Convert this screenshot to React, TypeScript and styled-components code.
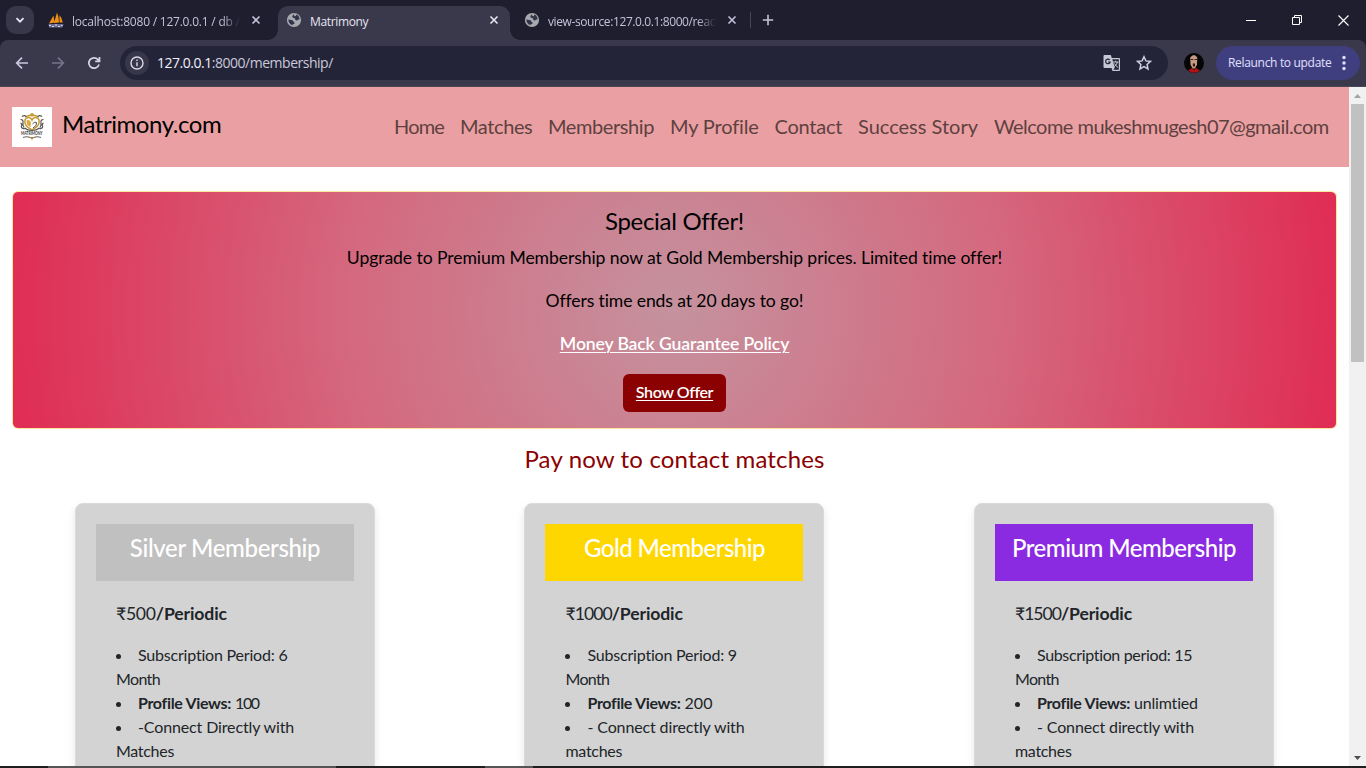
import React from 'react';
import styled, { createGlobalStyle } from 'styled-components';

const Global = createGlobalStyle`
  * { box-sizing: border-box; }
  html, body { margin: 0; height: 768px; overflow: hidden; background: #fff; }
`;

const Screen = styled.div`
  width: 1366px;
  height: 768px;
  display: flex;
  flex-direction: column;
  overflow: hidden;
  font-family: 'Open Sans', sans-serif;
`;

const Spaced = styled.span<{ $ls?: number; $bold?: boolean }>`
  letter-spacing: ${p => p.$ls ?? 0}px;
  font-weight: ${p => (p.$bold ? 700 : 'inherit')};
  font-variant-ligatures: none;
  white-space: nowrap;
`;

/* ---------- browser frame ---------- */

const TabStrip = styled.div`
  height: 40px;
  flex: none;
  display: flex;
  align-items: center;
  background: #1e1e2f;
  color: #c3c2d8;
`;
const TabSearch = styled.div`
  width: 28px;
  height: 28px;
  margin: 0 6px;
  border-radius: 10px;
  background: #38374a;
  display: grid;
  place-items: center;
`;
const Tab = styled.div<{ $active?: boolean; $w: number; $left?: number; $right?: number }>`
  position: relative;
  width: ${p => p.$w}px;
  height: 34px;
  margin-top: 6px;
  padding: 0 ${p => p.$right ?? 10}px 6px ${p => p.$left ?? 8}px;
  display: flex;
  align-items: center;
  border-radius: 10px 10px 0 0;
  background: ${p => (p.$active ? '#3a394c' : 'transparent')};
  color: ${p => (p.$active ? '#e6e5f2' : '#c3c2d8')};
  font-size: 12px;
  &::before, &::after {
    content: '';
    display: ${p => (p.$active ? 'block' : 'none')};
    position: absolute;
    bottom: 0;
    width: 10px;
    height: 10px;
  }
  &::before { left: -10px; background: radial-gradient(circle at 0 0, transparent 9.5px, #3a394c 10px); }
  &::after { right: -10px; background: radial-gradient(circle at 100% 0, transparent 9.5px, #3a394c 10px); }
`;
const TabTitle = styled.span<{ $fade?: boolean; $ls: number }>`
  flex: 1;
  margin: 2px 8px 0 8px;
  overflow: hidden;
  white-space: nowrap;
  letter-spacing: ${p => p.$ls}px;
  mask-image: ${p => (p.$fade ? 'linear-gradient(to right, #000 calc(100% - 18px), transparent)' : 'none')};
`;
const TabDivider = styled.div`
  width: 1px;
  height: 16px;
  margin: 0 11px 0 0;
  background: #46455a;
`;
const WindowButtons = styled.div`
  margin-left: auto;
  width: 138px;
  display: grid;
  grid-template-columns: repeat(3, 46px);
  place-items: center;
`;
const Toolbar = styled.div`
  height: 47px;
  display: flex;
  align-items: center;
  padding: 0 6px 1px 14px;
  background: #3a394c;
  border-bottom: 1px solid #4a4858;
  border-radius: 8px 8px 0 0;
`;
const ToolbarWrap = styled.div`
  flex: none;
  background: #1e1e2f;
`;
const NavIcons = styled.div`
  display: flex;
  gap: 20px;
  width: 106px;
`;
const UrlBar = styled.div`
  width: 1048px;
  height: 34px;
  border-radius: 17px;
  background: #242438;
  display: flex;
  align-items: center;
  padding: 0 16px 0 5px;
  font-size: 14px;
  color: #c9c8dc;
`;
const InfoBadge = styled.div`
  width: 24px;
  height: 24px;
  border-radius: 50%;
  background: #38374a;
  display: grid;
  place-items: center;
  margin-right: 8px;
`;
const Host = styled.span`color: #f1f0fb;`;
const UrlActions = styled.div`
  margin-left: auto;
  display: flex;
  align-items: center;
  gap: 15px;
`;
const Avatar = styled.div`
  width: 20px;
  height: 20px;
  margin: 0 12px 0 16px;
`;
const Relaunch = styled.div`
  width: 144px;
  height: 34px;
  border-radius: 17px;
  background: #3f3f80;
  color: #e2e0ff;
  display: flex;
  align-items: center;
  justify-content: space-between;
  padding: 0 14px 0 12px;
  font-size: 12px;
`;

/* ---------- page ---------- */

const Viewport = styled.div`
  height: 679px;
  flex: none;
  display: flex;
  overflow: hidden;
`;
const Page = styled.main`
  width: 1349px;
  height: 679px;
  overflow: hidden;
  font-family: Lato, sans-serif;
  color: #212529;
`;
const Scrollbar = styled.div`
  width: 17px;
  background: #f1f1f1;
  display: flex;
  flex-direction: column;
  align-items: center;
  justify-content: space-between;
`;
const ScrollTop = styled.div`
  display: flex;
  flex-direction: column;
  align-items: center;
`;
const ArrowBox = styled.div`
  width: 17px;
  height: 17px;
  display: grid;
  place-items: center;
`;
const Thumb = styled.div`
  width: 13px;
  height: 258px;
  background: #c1c1c1;
`;
const Navbar = styled.nav`
  height: 80px;
  display: flex;
  align-items: center;
  padding: 0 12px;
  background: #eaa0a2;
`;
const Brand = styled.div`
  display: flex;
  align-items: center;
  gap: 10px;
  font-size: 24px;
  line-height: 30px;
  color: #000;
  & > span { margin-top: -6px; }
`;
const NavLinks = styled.div`
  margin: -2px 0 0 auto;
  display: flex;
  font-size: 20px;
  line-height: 30px;
  color: #5e4041;
`;
const NavLink = styled.a<{ $w: number; $ls: number }>`
  width: ${p => p.$w}px;
  padding: 0 8px;
  letter-spacing: ${p => p.$ls}px;
  white-space: nowrap;
`;
const Offer = styled.section`
  margin: 24px 12px 0;
  height: 238px;
  padding: 14px 0 0;
  border: 1px solid #ffe69c;
  border-radius: 6px;
  background: radial-gradient(circle, #c5929e 0%, #d4697f 48%, #e02c54 100%);
  display: flex;
  flex-direction: column;
  align-items: center;
  color: #000;
`;
const OfferTitle = styled.h4`
  margin: 0 0 9px;
  font-size: 24px;
  font-weight: 400;
  line-height: 29px;
`;
const OfferText = styled.p<{ $link?: boolean }>`
  margin: 0 0 ${p => (p.$link ? 17 : 16)}px;
  font-size: 17.6px;
  line-height: 27px;
  color: ${p => (p.$link ? '#fff' : '#000')};
  font-weight: ${p => (p.$link ? 600 : 400)};
  text-decoration: ${p => (p.$link ? 'underline' : 'none')};
  text-underline-offset: 2px;
  text-decoration-thickness: 1px;
`;
const OfferButton = styled.button`
  width: 103px;
  height: 38px;
  border: 0;
  border-radius: 6px;
  background: #8b0000;
  color: #fff;
  font: 600 16px/24px Lato, sans-serif;
  text-decoration: underline;
  text-underline-offset: 2px;
  text-decoration-thickness: 1px;
  padding: 0 0 2px;
`;
const Heading = styled.h2`
  margin: 15px 0 0;
  text-align: center;
  font-size: 24px;
  line-height: 29px;
  font-weight: 400;
  color: #8b0000;
`;
const Plans = styled.div`
  margin-top: 30px;
  padding-left: 75px;
  display: flex;
  gap: 149.49px;
`;
const Card = styled.article`
  width: 300px;
  height: 500px;
  flex: none;
  padding: 20px;
  border: 1px solid #dadada;
  border-radius: 8px;
  background: #d3d3d3;
  box-shadow: 0 4px 8px rgba(0, 0, 0, 0.1);
`;
const CardTitle = styled.h3<{ $bg: string }>`
  margin: 0;
  height: 57px;
  padding-top: 9px;
  background: ${p => p.$bg};
  color: #fff;
  text-align: center;
  font-size: 24px;
  font-weight: 500;
  line-height: 29px;
`;
const CardBody = styled.div`
  padding: 19px 20px;
`;
const Price = styled.p`
  margin: 0 0 16px;
  font-size: 17.6px;
  line-height: 27px;
`;
const Features = styled.ul`
  margin: 0;
  padding: 0;
  font-size: 16px;
  line-height: 24px;
`;
const Feature = styled.li`
  list-style: none;
  white-space: nowrap;
  &::before {
    content: '';
    display: inline-block;
    width: 5px;
    height: 5px;
    margin-right: 17px;
    border-radius: 50%;
    background: #212529;
    vertical-align: 2px;
  }
`;
const Taskbar = styled.div`
  flex: 1;
  display: flex;
  background: #1f1f1f;
`;
const TaskSegment = styled.div<{ $w: number; $c: string }>`
  width: ${p => p.$w}px;
  background: ${p => p.$c};
`;

/* ---------- drawings ---------- */

const CloseIcon = () => (
  <svg width="16" height="16" viewBox="0 0 16 16" stroke="currentColor" strokeWidth="1.6">
    <path d="M4.5 4.5l7 7M11.5 4.5l-7 7" />
  </svg>
);
const Globe = () => (
  <svg width="16" height="16" viewBox="0 0 16 16">
    <circle cx="8" cy="8" r="7.100" fill="#a6a9ad" />
    <path d="M8 2.200Q6.500 3 6.300 4.400q0 1.400 1.500 1.500 1.500 0 1.300 1.400 0 1.200 1.600 1.100 1.400-.2 2-.9l.9-.2Q13.500 4 10.500 2.600L9.700 4.300 8.300 4z" fill="#33334a" />
    <path d="M2.400 7.300Q2.200 11.500 6.300 13.300L6.600 12.200q1.500.3 2-.7.200-1.300-1.100-1.800-.3-1.600-2-1.700-1.700.2-3.100-.7z" fill="#33334a" />
  </svg>
);
const Sails = () => (
  <svg width="16" height="16" viewBox="0 0 16 16">
    <path d="M1 11.5L5.500 3.500 6.500 10.500zM6 11L9 .5Q11 5 11 10.500zM11.500 10.500V3Q14 6 14.800 10.500z" fill="#f29111" />
    <path d="M.5 12h15l-1 3.500H1z" fill="#6d6c93" />
    <path d="M1 13.500h2M4 14.500h2M7 13h2M10 14.500h2M13 13.500h1.500" stroke="#d6d5ea" />
  </svg>
);
const Logo = () => (
  <svg width="40" height="40" viewBox="0 0 40 40">
    <path fill="#fff" d="M0 0h40v40H0z" />
    <path d="M20 23c-6-3-8-6-7-10 1-3.500 5.500-3.500 7 0 1.500-3.500 6-3.500 7 0 1 4-1 7-7 10z" fill="#fff" stroke="#c79a33" strokeWidth="1.500" />
    <path d="M14.500 13.500q3-1.500 4.500 2l-.5 5-3.500-3z" fill="#d9a93c" />
    <path d="M20.500 17q1.500-2.500 4-1.500 1 3-3.500 5.500" fill="none" stroke="#555" />
    <path d="M18 7.500h4M20 6v3.500M14 9.500q6-2.500 12 0" stroke="#c79a33" strokeWidth="1.500" fill="none" />
    <path d="M10 9.500q3-2 4 .5M30 9.500q-3-2-4 .5M8.500 12.500q3 0 2.500 3t1 5M31.500 12.500q-3 0-2.500 3t-1 5M8.500 16q2 1 1 3t3 3M31.500 16q-2 1-1 3t-3 3M12.500 21q3 2.500 7.500 2.500t7.500-2.500" fill="none" stroke="#575757" strokeWidth="1.200" />
    <text x="9" y="28.200" fontFamily="Lato, sans-serif" fontSize="5.200" fontWeight="700" fill="#333" textLength="21.500" lengthAdjust="spacingAndGlyphs">MATRIMONY</text>
    <path d="M11 30.500q4-1.500 7 0M29 30.500q-4-1.500-7 0" stroke="#666" fill="none" strokeWidth="1.200" />
    <path d="M17.500 30h5L20 32.800z" fill="#a98331" />
  </svg>
);
const Face = () => (
  <svg width="20" height="20" viewBox="0 0 20 20">
    <circle cx="10" cy="10" r="10" fill="#050505" />
    <path d="M6.200 4.500Q10 -.5 13.300 4.500l-.3 7L11 15.500H8.500L6.500 11.500z" fill="#c49a84" />
    <path d="M6.800 6.500h2.500M10.500 6.500H13" stroke="#3a2520" />
    <path d="M8.800 10.500h2.200v3H9z" fill="#3d1512" />
    <path d="M4 17.500l4-2.500 2 2 2-2 4 2.500Q10 22 4 17.500z" fill="#b01414" />
  </svg>
);
const Translate = () => (
  <svg width="18" height="18" viewBox="0 0 18 18">
    <path d="M1.500 1h6.300l1 3H16a1 1 0 0 1 1 1v11a1 1 0 0 1-1 1H9.500l-1-3h-7a1 1 0 0 1-1-1V2a1 1 0 0 1 1-1z" fill="#c7c6d4" />
    <path d="M9.300 5.200h6.500v10.500h-5.500l1.500-2z" fill="#242438" />
    <path d="M10 8h5.500M12.700 6.700V8M14.500 8q-.8 3-3.200 4.500M11.500 9.500q1 2 3.500 4" stroke="#c7c6d4" fill="none" />
    <path d="M6.800 6a2.300 2.300 0 1 0 .4 2H5" stroke="#242438" strokeWidth="1.200" fill="none" />
  </svg>
);

/* ---------- content ---------- */

const links: [string, number, number][] = [
  ['Home', 66, -0.8],
  ['Matches', 88, -0.4],
  ['Membership', 122, -0.4],
  ['My Profile', 104.5, -0.15],
  ['Contact', 83.5, -0.25],
  ['Success Story', 136, 0],
  ['Welcome mukeshmugesh07@gmail.com', 351, -0.53],
];

interface Plan {
  title: string;
  titleLs: number;
  bg: string;
  price: string;
  priceLs: number;
  period: string;
  periodLs: number;
  views: string;
  viewsLs: number;
  connect: string;
  matches: string;
}
const plans: Plan[] = [
  { title: 'Silver Membership', titleLs: -0.35, bg: '#c0c0c0', price: '₹500', priceLs: -0.25, period: 'Subscription Period: 6', periodLs: -0.2, views: '100', viewsLs: -1.5, connect: '-Connect Directly with', matches: 'Matches' },
  { title: 'Gold Membership', titleLs: -0.53, bg: '#ffd700', price: '₹1000', priceLs: -0.95, period: 'Subscription Period: 9', periodLs: -0.2, views: '200', viewsLs: 0, connect: '- Connect directly with', matches: 'matches' },
  { title: 'Premium Membership', titleLs: -0.5, bg: '#8a2be2', price: '₹1500', priceLs: -1, period: 'Subscription period: 15', periodLs: -0.34, views: 'unlimtied', viewsLs: -0.2, connect: '- Connect directly with', matches: 'matches' },
];

export default function App() {
  return (
    <Screen>
      <Global />
      <TabStrip>
        <TabSearch>
          <svg width="12" height="12" viewBox="0 0 12 12" fill="none" stroke="#e6e5f2" strokeWidth="1.800"><path d="M2.500 4.200L6 7.700l3.500-3.500" /></svg>
        </TabSearch>
        <Tab $w={238} $right={14}><Sails /><TabTitle $fade $ls={-0.22}>localhost:8080 / 127.0.0.1 / db / matrimony</TabTitle><CloseIcon /></Tab>
        <Tab $w={232} $right={8} $active><Globe /><TabTitle $ls={-0.35}>Matrimony</TabTitle><CloseIcon /></Tab>
        <Tab $w={240} $left={14}><Globe /><TabTitle $fade $ls={-0.4}>view-source:127.0.0.1:8000/read</TabTitle><CloseIcon /></Tab>
        <TabDivider />
        <svg width="12" height="12" viewBox="0 0 12 12" stroke="#c3c2d8" strokeWidth="1.600"><path d="M6 .8v10.400M.8 6h10.400" /></svg>
        <WindowButtons>
          <svg width="10" height="10" viewBox="0 0 10 10" stroke="#fff"><path d="M0 5.500h10" /></svg>
          <svg width="11" height="11" viewBox="0 0 11 11" stroke="#fff" fill="none"><path d="M.5 2.500h7v7h-7zM2.500 2.500v-2h7v7h-2" /></svg>
          <svg width="11" height="11" viewBox="0 0 11 11" stroke="#fff" strokeWidth="1.100"><path d="M.5.5l10 10M10.500.5l-10 10" /></svg>
        </WindowButtons>
      </TabStrip>
      <ToolbarWrap>
        <Toolbar>
          <NavIcons>
            <svg width="16" height="16" viewBox="0 0 16 16" fill="none" stroke="#c9c8e0" strokeWidth="1.700"><path d="M14 8H3M8 2.700L2.700 8 8 13.300" /></svg>
            <svg width="16" height="16" viewBox="0 0 16 16" fill="none" stroke="#75748a" strokeWidth="1.700"><path d="M2 8h11M8 2.700L13.300 8 8 13.300" /></svg>
            <svg width="16" height="16" viewBox="0 0 16 16" fill="none" stroke="#d5d4e4" strokeWidth="1.700"><path d="M13 9.500A5.200 5.200 0 1 1 11.800 4.400L13.300 6M13.500 2v4.300H9.200" /></svg>
          </NavIcons>
          <UrlBar>
            <InfoBadge>
              <svg width="14" height="14" viewBox="0 0 14 14" fill="none" stroke="#dad9e8" strokeWidth="1.400"><circle cx="7" cy="7" r="6" /><path d="M7 6.200v4M7 3.600v1.500" /></svg>
            </InfoBadge>
            <Spaced $ls={-0.48}><Host>127.0.0.1</Host>:8000/membership/</Spaced>
            <UrlActions>
              <Translate />
              <svg width="16" height="16" viewBox="0 0 16 16" fill="none" stroke="#cfcedd" strokeWidth="1.500"><path d="M8 1.700l1.900 4.200 4.600.5-3.400 3.100.9 4.500-4-2.300-4 2.300.9-4.500L1.500 6.400l4.600-.5z" /></svg>
            </UrlActions>
          </UrlBar>
          <Avatar><Face /></Avatar>
          <Relaunch>
            <Spaced $ls={-0.32}>Relaunch to update</Spaced>
            <svg width="4" height="16" viewBox="0 0 4 16" fill="#e2e0ff"><circle cx="2" cy="2.500" r="1.700" /><circle cx="2" cy="8" r="1.700" /><circle cx="2" cy="13.500" r="1.700" /></svg>
          </Relaunch>
        </Toolbar>
      </ToolbarWrap>

      <Viewport>
        <Page>
          <Navbar>
            <Brand><Logo /><Spaced $ls={-0.45}>Matrimony.com</Spaced></Brand>
            <NavLinks>
              {links.map(([label, w, ls]) => <NavLink key={label} $w={w} $ls={ls}>{label}</NavLink>)}
            </NavLinks>
          </Navbar>
          <Offer>
            <OfferTitle><Spaced $ls={-0.3}>Special Offer!</Spaced></OfferTitle>
            <OfferText><Spaced $ls={-0.09}>Upgrade to Premium Membership now at Gold Membership prices. Limited time offer!</Spaced></OfferText>
            <OfferText><Spaced $ls={-0.12}>Offers time ends at 20 days to go!</Spaced></OfferText>
            <OfferText $link><Spaced $ls={-0.13}>Money Back Guarantee Policy</Spaced></OfferText>
            <OfferButton><Spaced $ls={-0.4}>Show Offer</Spaced></OfferButton>
          </Offer>
          <Heading><Spaced $ls={0.16}>Pay now to contact matches</Spaced></Heading>
          <Plans>
            {plans.map(p => (
              <Card key={p.title}>
                <CardTitle $bg={p.bg}><Spaced $ls={p.titleLs}>{p.title}</Spaced></CardTitle>
                <CardBody>
                  <Price><Spaced $ls={p.priceLs}>{p.price}</Spaced><Spaced $bold $ls={-0.12}>/Periodic</Spaced></Price>
                  <Features>
                    <Feature><Spaced $ls={p.periodLs}>{p.period}</Spaced><br /><Spaced $ls={-0.65}>Month</Spaced></Feature>
                    <Feature><Spaced $bold $ls={-0.33}>Profile Views:</Spaced> <Spaced $ls={p.viewsLs}>{p.views}</Spaced></Feature>
                    <Feature><Spaced $ls={-0.13}>{p.connect}</Spaced><br /><Spaced $ls={-0.3}>{p.matches}</Spaced></Feature>
                  </Features>
                </CardBody>
              </Card>
            ))}
          </Plans>
        </Page>
        <Scrollbar>
          <ScrollTop>
            <ArrowBox><svg width="7" height="4" viewBox="0 0 7 4"><path d="M0 4l3.500-4L7 4z" fill="#a3a3a3" /></svg></ArrowBox>
            <Thumb />
          </ScrollTop>
          <ArrowBox><svg width="7" height="4" viewBox="0 0 7 4"><path d="M0 0l3.500 4L7 0z" fill="#505050" /></svg></ArrowBox>
        </Scrollbar>
      </Viewport>
      <Taskbar>
        <TaskSegment $w={48} $c="#1f1f1f" />
        <TaskSegment $w={288} $c="#555" />
        <TaskSegment $w={149} $c="#1f1f1f" />
        <TaskSegment $w={48} $c="#555" />
      </Taskbar>
    </Screen>
  );
}
